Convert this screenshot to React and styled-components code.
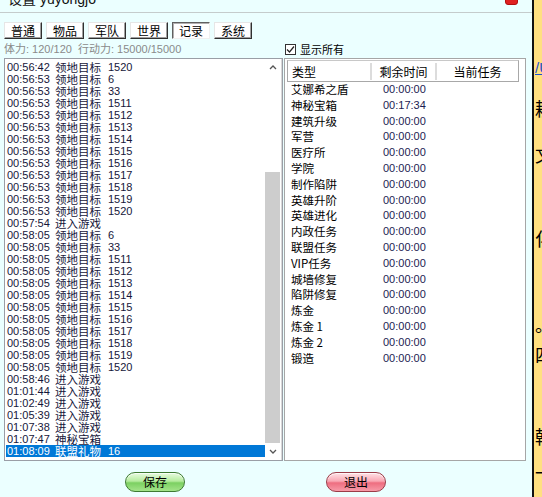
import React from 'react';
import styled, { createGlobalStyle } from 'styled-components';

const tabs = ['普通', '物品', '军队', '世界', '记录', '系统'];

const logs = [
  ['00:56:42', '领地目标', '1520'],
  ['00:56:53', '领地目标', '6'],
  ['00:56:53', '领地目标', '33'],
  ['00:56:53', '领地目标', '1511'],
  ['00:56:53', '领地目标', '1512'],
  ['00:56:53', '领地目标', '1513'],
  ['00:56:53', '领地目标', '1514'],
  ['00:56:53', '领地目标', '1515'],
  ['00:56:53', '领地目标', '1516'],
  ['00:56:53', '领地目标', '1517'],
  ['00:56:53', '领地目标', '1518'],
  ['00:56:53', '领地目标', '1519'],
  ['00:56:53', '领地目标', '1520'],
  ['00:57:54', '进入游戏', ''],
  ['00:58:05', '领地目标', '6'],
  ['00:58:05', '领地目标', '33'],
  ['00:58:05', '领地目标', '1511'],
  ['00:58:05', '领地目标', '1512'],
  ['00:58:05', '领地目标', '1513'],
  ['00:58:05', '领地目标', '1514'],
  ['00:58:05', '领地目标', '1515'],
  ['00:58:05', '领地目标', '1516'],
  ['00:58:05', '领地目标', '1517'],
  ['00:58:05', '领地目标', '1518'],
  ['00:58:05', '领地目标', '1519'],
  ['00:58:05', '领地目标', '1520'],
  ['00:58:46', '进入游戏', ''],
  ['01:01:44', '进入游戏', ''],
  ['01:02:49', '进入游戏', ''],
  ['01:05:39', '进入游戏', ''],
  ['01:07:38', '进入游戏', ''],
  ['01:07:47', '神秘宝箱', ''],
  ['01:08:09', '联盟礼物', '16'],
];

const timers = [
  ['艾娜希之盾', '00:00:00'],
  ['神秘宝箱', '00:17:34'],
  ['建筑升级', '00:00:00'],
  ['军营', '00:00:00'],
  ['医疗所', '00:00:00'],
  ['学院', '00:00:00'],
  ['制作陷阱', '00:00:00'],
  ['英雄升阶', '00:00:00'],
  ['英雄进化', '00:00:00'],
  ['内政任务', '00:00:00'],
  ['联盟任务', '00:00:00'],
  ['VIP任务', '00:00:00'],
  ['城墙修复', '00:00:00'],
  ['陷阱修复', '00:00:00'],
  ['炼金', '00:00:00'],
  ['炼金 1', '00:00:00'],
  ['炼金 2', '00:00:00'],
  ['锻造', '00:00:00'],
];

const App = () => {
  return (
    <Screen>
      <GlobalStyle />
      <Window>
        <TitleBar>
          <TitleText>设置 yuyongjo</TitleText>
          <CloseIcon />
        </TitleBar>

        <TabRow>
          {tabs.map((t) => (
            <Tab key={t} $active={t === '记录'}>{t}</Tab>
          ))}
        </TabRow>

        <Panels>
          <StatusText>体力: 120/120&nbsp;&nbsp;行动力: 15000/15000</StatusText>
          <CheckRow>
            <CheckBox>
              <svg width="9" height="9" viewBox="0 0 9 9">
                <path d="M1 4.5 L3.5 7 L8 1.5" fill="none" stroke="#222" strokeWidth="1.2" />
              </svg>
            </CheckBox>
            显示所有
          </CheckRow>

          <ListBox>
            <LogRows>
              {logs.map((l, i) => (
                <LogRow key={i} $selected={i === logs.length - 1}>
                  <span>{l[0]}</span>
                  <CnText>{l[1]}</CnText>
                  <span>{l[2]}</span>
                </LogRow>
              ))}
            </LogRows>
            <ScrollBar>
              <Arrow>
                <svg width="8" height="5" viewBox="0 0 8 5">
                  <path d="M1 4 L4 1 L7 4" fill="none" stroke="#555" strokeWidth="1.3" />
                </svg>
              </Arrow>
              <Track>
                <Thumb />
              </Track>
              <Arrow>
                <svg width="8" height="5" viewBox="0 0 8 5">
                  <path d="M1 1 L4 4 L7 1" fill="none" stroke="#555" strokeWidth="1.3" />
                </svg>
              </Arrow>
            </ScrollBar>
          </ListBox>

          <TableBox>
            <TableHead>
              <HeadCell $align="left">类型</HeadCell>
              <HeadCell>剩余时间</HeadCell>
              <HeadCell $last>当前任务</HeadCell>
            </TableHead>
            {timers.map((r) => (
              <TimerRow key={r[0]}>
                <CnText>{r[0]}</CnText>
                <TimeText>{r[1]}</TimeText>
                <span />
              </TimerRow>
            ))}
          </TableBox>
        </Panels>

        <Footer>
          <PillButton $tone="green">保存</PillButton>
          <PillButton $tone="red">退出</PillButton>
        </Footer>
      </Window>

      <SideStrip>
        <StripLink>/U</StripLink>
        <StripChar $top={24}>耕</StripChar>
        <StripChar $top={28}>文</StripChar>
        <StripChar $top={66}>化</StripChar>
        <StripChar $top={68}>。</StripChar>
        <StripChar $top={12}>四</StripChar>
        <StripChar $top={64}>韩</StripChar>
        <StripChar $top={18}>一</StripChar>
      </SideStrip>
    </Screen>
  );
};

const GlobalStyle = createGlobalStyle`
  html, body {
    margin: 0;
    padding: 0;
  }
  body {
    width: 542px;
    height: 497px;
    overflow: hidden;
    background: #EBFFFF;
    font-family: "Liberation Sans", "Noto Sans CJK SC", sans-serif;
    color: #000;
  }
`;

const Screen = styled.div`
  display: flex;
  width: 542px;
  height: 497px;
  overflow: hidden;
`;

const Window = styled.div`
  width: 532px;
  height: 497px;
  background: #EBFFFF;
  display: flex;
  flex-direction: column;
`;

const TitleBar = styled.div`
  height: 12px;
  border-bottom: 1px solid #c4cccc;
  display: flex;
  overflow: hidden;
  padding-left: 8px;
`;

const TitleText = styled.div`
  margin-top: -9px;
  font-size: 14px;
  line-height: 16px;
  font-family: "Liberation Sans", "Noto Sans CJK SC", sans-serif;
  color: #111;
`;

const CloseIcon = styled.span`
  margin-left: auto;
  margin-right: 14px;
  margin-top: -8px;
  width: 11px;
  height: 11px;
  border-radius: 3px;
  background: #e02020;
  border: 1px solid #b01010;
`;

const TabRow = styled.div`
  display: flex;
  gap: 4px;
  margin-top: 9px;
  padding-left: 4px;
  height: 17px;
`;

const Tab = styled.div`
  width: 38px;
  height: 17px;
  box-sizing: border-box;
  display: flex;
  align-items: center;
  justify-content: center;
  font-family: "Noto Sans CJK SC", sans-serif;
  font-size: 12px;
  background: #fff;
  border-top: 1px solid ${(p) => (p.$active ? '#606060' : '#e6e6e6')};
  border-left: 1px solid ${(p) => (p.$active ? '#606060' : '#e6e6e6')};
  border-right: 1px solid ${(p) => (p.$active ? '#f0f0f0' : '#303030')};
  border-bottom: 1px solid ${(p) => (p.$active ? '#f0f0f0' : '#303030')};
  box-shadow: ${(p) => (p.$active ? 'inset 1px 1px 0 #b0b0b0' : 'inset -1px -1px 0 #a0a0a0')};
`;

const Panels = styled.div`
  display: grid;
  grid-template-columns: 279px 242px;
  grid-template-rows: 19px 403px;
  column-gap: 1px;
  padding-left: 4px;
`;

const StatusText = styled.div`
  align-self: end;
  padding-bottom: 3px;
  font-size: 11px;
  line-height: 12px;
  color: #8a8a8a;
  font-family: "Liberation Sans", "Noto Sans CJK SC", sans-serif;
`;

const CheckRow = styled.div`
  display: flex;
  align-items: center;
  gap: 4px;
  align-self: end;
  padding-bottom: 3px;
  padding-left: 1px;
  font-family: "Noto Sans CJK SC", sans-serif;
  font-size: 11px;
  line-height: 12px;
`;

const CheckBox = styled.span`
  width: 11px;
  height: 11px;
  box-sizing: border-box;
  border: 1px solid #333;
  background: #fff;
  display: flex;
  align-items: center;
  justify-content: center;
`;

const ListBox = styled.div`
  display: flex;
  box-sizing: border-box;
  background: #fff;
  border: 1px solid #9a9ea6;
  box-shadow: inset -1px 0 0 #d8d8d8;
`;

const LogRows = styled.div`
  flex: 1;
  padding-top: 2px;
  padding-left: 1px;
`;

const LogRow = styled.div`
  display: grid;
  grid-template-columns: 48px 53px 1fr;
  height: 12px;
  line-height: 12px;
  padding-left: 1px;
  font-size: 11px;
  color: ${(p) => (p.$selected ? '#fff' : '#16163a')};
  background: ${(p) => (p.$selected ? '#0078d7' : 'transparent')};
  white-space: nowrap;
`;

const CnText = styled.span`
  font-family: "Noto Sans CJK SC", sans-serif;
  font-size: 11.5px;
  color: inherit;
`;

const ScrollBar = styled.div`
  width: 16px;
  margin-right: 1px;
  display: flex;
  flex-direction: column;
  background: #fff;
`;

const Arrow = styled.div`
  height: 17px;
  display: flex;
  align-items: center;
  justify-content: center;
`;

const Track = styled.div`
  flex: 1;
  display: flex;
  flex-direction: column;
  justify-content: flex-end;
  padding: 0 1px 0 0;
`;

const Thumb = styled.div`
  height: 271px;
  background: #cdcdcd;
`;

const TableBox = styled.div`
  box-sizing: border-box;
  background: #fff;
  border: 1px solid #a6a6a6;
  padding: 1px 6px 0 2px;
`;

const TableHead = styled.div`
  display: grid;
  grid-template-columns: 84px 65px 1fr;
  border: 1px solid #a8a8a8;
  border-top-color: #c8c8c8;
  box-sizing: border-box;
  height: 22px;
  font-family: "Noto Sans CJK SC", sans-serif;
  font-size: 12px;
`;

const HeadCell = styled.div`
  display: flex;
  align-items: center;
  justify-content: ${(p) => (p.$align === 'left' ? 'flex-start' : 'center')};
  padding-left: ${(p) => (p.$align === 'left' ? '4px' : '0')};
  border-right: ${(p) => (p.$last ? 'none' : '2px solid #dcdcdc')};
  margin: 2px 0;
`;

const TimerRow = styled.div`
  display: grid;
  grid-template-columns: 92px 1fr;
  height: 15.8px;
  line-height: 15.8px;
  padding-left: 4px;
  font-size: 12px;
  white-space: nowrap;
`;

const TimeText = styled.span`
  font-size: 11px;
  color: #1c1c52;
`;

const Footer = styled.div`
  display: flex;
  padding: 11px 0 0 125px;
  gap: 141px;
`;

const PillButton = styled.button`
  width: 60px;
  height: 20px;
  padding: 0;
  border-radius: 10px;
  font-family: "Noto Sans CJK SC", sans-serif;
  font-size: 12px;
  line-height: 18px;
  color: #000;
  border: 1px solid ${(p) => (p.$tone === 'green' ? '#3d7a32' : '#9a3c48')};
  background: ${(p) =>
    p.$tone === 'green'
      ? 'linear-gradient(#e8fbe0 0%, #b6ec9e 45%, #7cd062 55%, #a4e48a 100%)'
      : 'linear-gradient(#ffe2e6 0%, #f9a8b4 45%, #ee6e80 55%, #f79aa8 100%)'};
  box-shadow: inset 0 1px 0 rgba(255, 255, 255, 0.7);
`;

const SideStrip = styled.div`
  flex: 1;
  background: #FFE080;
  border-left: 2px solid #111;
  display: flex;
  flex-direction: column;
  overflow: hidden;
  padding-left: 1px;
`;

const StripLink = styled.div`
  margin-top: 60px;
  font-size: 15px;
  line-height: 15px;
  color: #1a4fd0;
  text-decoration: underline;
  white-space: nowrap;
`;

const StripChar = styled.div`
  margin-top: ${(p) => p.$top}px;
  font-family: "Noto Sans CJK SC", sans-serif;
  font-size: 18px;
  line-height: 18px;
  white-space: nowrap;
`;

export default App;
